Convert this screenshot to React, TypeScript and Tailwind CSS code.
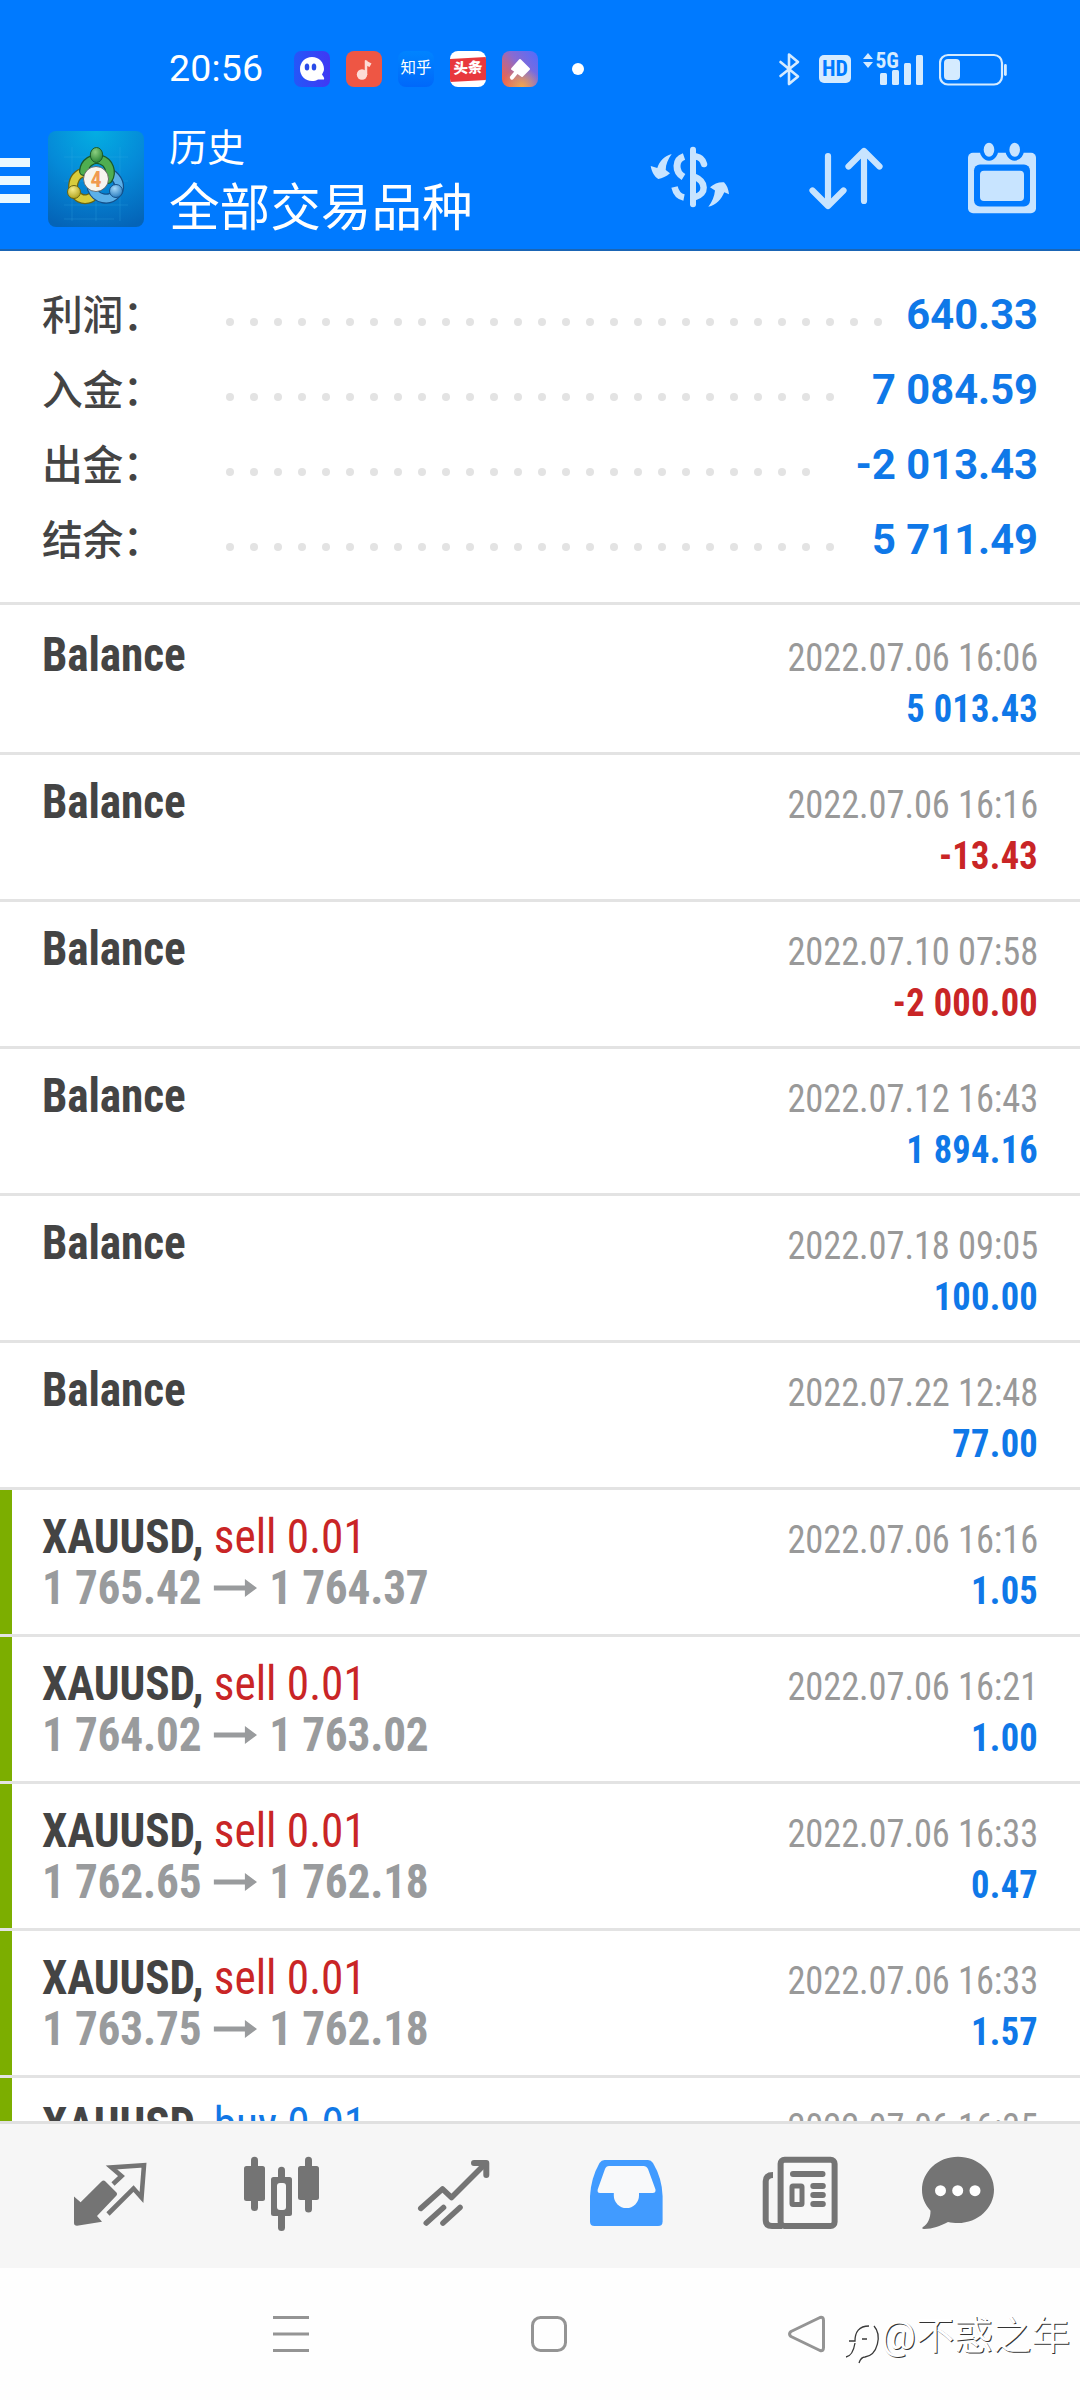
import React from 'react';

interface SummaryLine {
    label: string;
    dots: number;
    value: string;
}

interface Deal {
    symbol: string;
    side?: 'buy' | 'sell';
    volume?: string;
    open?: string;
    close?: string;
    time: string;
    profit: string;
}

const summary: SummaryLine[] = [
    { label: '利润：', dots: 28, value: '640.33' },
    { label: '入金：', dots: 26, value: '7 084.59' },
    { label: '出金：', dots: 25, value: '-2 013.43' },
    { label: '结余：', dots: 26, value: '5 711.49' },
];

const deals: Deal[] = [
    { symbol: 'Balance', time: '2022.07.06 16:06', profit: '5 013.43' },
    { symbol: 'Balance', time: '2022.07.06 16:16', profit: '-13.43' },
    { symbol: 'Balance', time: '2022.07.10 07:58', profit: '-2 000.00' },
    { symbol: 'Balance', time: '2022.07.12 16:43', profit: '1 894.16' },
    { symbol: 'Balance', time: '2022.07.18 09:05', profit: '100.00' },
    { symbol: 'Balance', time: '2022.07.22 12:48', profit: '77.00' },
    { symbol: 'XAUUSD', side: 'sell', volume: '0.01', open: '1 765.42', close: '1 764.37', time: '2022.07.06 16:16', profit: '1.05' },
    { symbol: 'XAUUSD', side: 'sell', volume: '0.01', open: '1 764.02', close: '1 763.02', time: '2022.07.06 16:21', profit: '1.00' },
    { symbol: 'XAUUSD', side: 'sell', volume: '0.01', open: '1 762.65', close: '1 762.18', time: '2022.07.06 16:33', profit: '0.47' },
    { symbol: 'XAUUSD', side: 'sell', volume: '0.01', open: '1 763.75', close: '1 762.18', time: '2022.07.06 16:33', profit: '1.57' },
    { symbol: 'XAUUSD', side: 'buy', volume: '0.01', open: '1 763.46', close: '1 763.90', time: '2022.07.06 16:35', profit: '0.44' },
];

const StatusBar = () => (
    <div className="flex h-[120px] items-center pt-[18px] pl-[169px] text-white">
        <div className="w-[125px] text-[37.5px] leading-none font-[450] tracking-[0.2px]">20:56</div>
        <div className="flex gap-4">
            {/* Ghost browser */}
            <svg className="h-9 w-9" viewBox="0 0 36 36">
                <defs>
                    <linearGradient id="ghost" x1="0" y1="0" x2="1" y2="0">
                        <stop offset="0" stopColor="#2457f8" />
                        <stop offset="1" stopColor="#4038f4" />
                    </linearGradient>
                </defs>
                <rect width="36" height="36" rx="7" fill="url(#ghost)" />
                <path d="M18 6c-7 0-12 5.500-12 12s5 12 12 12c2.500 0 4-.5 6-1.500h6c.8-2-1-3-2-5 1-2 2-3.500 2-5.500C30 11.500 25 6 18 6z" fill="#fff" />
                <ellipse cx="13" cy="16" rx="2.300" ry="3.600" fill="#2a4be8" />
                <ellipse cx="20" cy="16" rx="2.300" ry="3.600" fill="#2a4be8" />
            </svg>
            {/* Music */}
            <svg className="h-9 w-9" viewBox="0 0 36 36">
                <rect width="36" height="36" rx="8" fill="#ee5644" />
                <circle cx="16" cy="23.500" r="5.200" fill="#fddcd6" />
                <path d="M20 24V9.500" fill="none" stroke="#fddcd6" strokeWidth="2.500" />
                <path d="M19 9l6.500 3.500-2 3.500L19 14z" fill="#fddcd6" />
            </svg>
            <div className="flex h-9 w-9 items-center justify-center rounded-lg bg-linear-to-b from-[#0084ff] to-[#0068fa] text-[15.5px] leading-none whitespace-nowrap">
                知乎
            </div>
            <div className="flex h-9 w-9 items-center justify-center overflow-hidden rounded-lg bg-white">
                <div className="flex h-[23px] w-9 shrink-0 -skew-y-3 items-center justify-center bg-[#e8383d] text-[14.5px] leading-none font-black whitespace-nowrap">
                    头条
                </div>
            </div>
            <svg className="h-9 w-9" viewBox="0 0 36 36">
                <defs>
                    <linearGradient id="pin" x1="0" y1="0.700" x2="1" y2="0">
                        <stop offset="0" stopColor="#ea6450" />
                        <stop offset="0.450" stopColor="#8a6bd0" />
                        <stop offset="1" stopColor="#4f6cff" />
                    </linearGradient>
                    <radialGradient id="glow" cx="0.550" cy="1" r="0.550">
                        <stop offset="0" stopColor="#f0a850" />
                        <stop offset="1" stopColor="#f0a850" stopOpacity="0" />
                    </radialGradient>
                </defs>
                <rect width="36" height="36" rx="8" fill="url(#pin)" />
                <rect width="36" height="36" rx="8" fill="url(#glow)" />
                <path d="M18 9l9 9-7 7-10-7z" fill="#fff" stroke="#fff" strokeWidth="2" strokeLinejoin="round" />
                <path d="M14.500 21l-4.500 5.500" stroke="#fff" strokeWidth="4.200" strokeLinecap="round" />
            </svg>
        </div>
        <div className="ml-[34px] h-3 w-3 rounded-full bg-white" />
        <svg className="ml-[194px] h-9 w-6" viewBox="0 0 24 36" fill="none" stroke="#d5ebff" strokeWidth="2.600" strokeLinejoin="round" strokeLinecap="round">
            <path d="M2.500 11L20 25.500l-9 7.500V3.500L20 11 2.500 25" />
        </svg>
        <div className="ml-[17px] flex h-7 w-8 items-center justify-center rounded-[5px] bg-[#d5ebff] text-[22px] leading-none font-bold text-[#007aff] font-stretch-condensed">
            HD
        </div>
        <svg className="ml-[11px] h-9 w-[62px] overflow-visible" viewBox="0 0 62 36" fill="#d5ebff">
            <path d="M1 8l5-6 5 6zM1 11h10l-5 6z" />
            <text x="13.500" y="17" className="text-[21.500px] font-bold font-stretch-condensed">5G</text>
            <rect x="18" y="22" width="7" height="12" rx="1.500" />
            <rect x="30" y="19" width="7" height="15" rx="1.500" />
            <rect x="42" y="12" width="7" height="22" rx="1.500" />
            <rect x="54" y="4" width="7" height="30" rx="1.500" />
        </svg>
        <svg className="ml-[15px] h-9 w-[68px]" viewBox="0 0 68 36" fill="#d5ebff">
            <rect x="1" y="4" width="62" height="29.500" rx="8" fill="none" stroke="#d5ebff" strokeWidth="2.200" />
            <rect x="5" y="8" width="16" height="21" rx="4" />
            <rect x="65" y="13" width="2.800" height="12" rx="1.400" />
        </svg>
    </div>
);

const AppLogo = () => (
    <svg className="h-24 w-24" viewBox="0 0 96 96">
        <defs>
            <radialGradient id="tile" cx="0.500" cy="0" r="1.050">
                <stop offset="0" stopColor="#04aee2" />
                <stop offset="0.500" stopColor="#058ad8" />
                <stop offset="1" stopColor="#0464b8" />
            </radialGradient>
            <radialGradient id="green" cx="0.400" cy="0.300" r="0.800">
                <stop offset="0" stopColor="#8ccf80" />
                <stop offset="1" stopColor="#1d7a2c" />
            </radialGradient>
            <radialGradient id="yellow" cx="0.400" cy="0.300" r="0.800">
                <stop offset="0" stopColor="#f6ec8a" />
                <stop offset="1" stopColor="#a89a12" />
            </radialGradient>
            <radialGradient id="blue" cx="0.400" cy="0.300" r="0.800">
                <stop offset="0" stopColor="#a4d8fa" />
                <stop offset="1" stopColor="#1b72b8" />
            </radialGradient>
        </defs>
        <rect width="96" height="96" rx="8" fill="url(#tile)" />
        <path d="M16 26h64M16 50h64M16 74h64M16 88h50M24 16v74M48 16v74M72 16v74" stroke="#3ab4ea" strokeOpacity="0.250" />
        <g fill="none" strokeLinecap="round">
            <path d="M38 41a14 14 0 0 0-6 26c5 2.500 11 1 14-3" stroke="#6a6410" strokeWidth="10" />
            <path d="M38 41a14 14 0 0 0-6 26c5 2.500 11 1 14-3" stroke="#d8cc3c" strokeWidth="7.500" />
            <path d="M65 44c7 6 8 14 3 19-7 8-20 5-24-5" stroke="#14508a" strokeWidth="10" />
            <path d="M65 44c7 6 8 14 3 19-7 8-20 5-24-5" stroke="#5cb0e8" strokeWidth="7.500" />
            <path d="M36 40a13 13 0 1 1 24 8" stroke="#1a5a2a" strokeWidth="10" />
            <path d="M36 40a13 13 0 1 1 24 8" stroke="#4fae50" strokeWidth="7.500" />
        </g>
        <ellipse cx="48.500" cy="24" rx="6.200" ry="7.500" fill="url(#green)" stroke="#1a5a2a" />
        <circle cx="26" cy="61" r="6.500" fill="url(#yellow)" stroke="#6a6410" />
        <circle cx="68" cy="60" r="6.500" fill="url(#blue)" stroke="#14508a" />
        <circle cx="48" cy="48" r="12.500" fill="#f7f5f0" stroke="#555" strokeWidth="0.800" />
        <text x="48" y="56" textAnchor="middle" fill="#f09a50" className="text-[22px] font-bold font-stretch-condensed">4</text>
    </svg>
);

const AppBar = () => (
    <div className="flex h-[129px] items-start text-white">
        <div className="mt-[38px] flex w-[30px] flex-col gap-[9px]">
            <div className="h-[9px] bg-[#eaf9ff]" />
            <div className="h-[9px] bg-[#eaf9ff]" />
            <div className="h-[9px] bg-[#eaf9ff]" />
        </div>
        <div className="mt-[11px] ml-[18px]">
            <AppLogo />
        </div>
        <div className="ml-[25px] w-[481px]">
            <div className="pt-[3px] text-[38px] leading-[50px]">历史</div>
            <div className="text-[50.6px] leading-[71px]">全部交易品种</div>
        </div>
        <svg className="mt-[25px] h-16 w-20" viewBox="0 0 80 64" fill="none" stroke="#c8e4ff" strokeWidth="6.500">
            <path d="M43 4.700v54.600" strokeWidth="6" strokeLinecap="round" />
            <path d="M34 11.500c-9 3-9.500 15-.5 20.500" strokeWidth="7" />
            <path d="M24.500 42c1.500 6.500 4.500 9.500 9.500 10.500" />
            <path d="M46 11.500c5 .8 7 3.500 8 7.500" strokeLinecap="round" />
            <path d="M45 32c11 4.500 12 17 0 20" />
            <path d="M21.700 9c-8 2-12.500 8-14.400 14L.7 21c1 6 4 11 7.600 13 4-.5 8-2.500 11.700-5.700L15.700 25c0-6 2.500-11 6-16zM58.300 61.700c4-5 6-10 6.700-16.200l-5-3.200c4-3.500 9-5.500 14-5 3 3 4.500 7 5 12l-4.700-2c-3 7-8 13-16 14.400z" fill="#c8e4ff" stroke="none" />
        </svg>
        <svg className="ml-[76px] mt-[26px] h-16 w-20" viewBox="0 0 80 64" fill="none" stroke="#c8e4ff" strokeWidth="6.200" strokeLinecap="round" strokeLinejoin="round">
            <path d="M22 10v49M6.500 44.500L22 60l15.500-15.500M58 55V6M42.500 20.500L58 5l15.500 15.500" />
        </svg>
        <svg className="ml-[80px] mt-[22px] h-[72px] w-[72px]" viewBox="0 0 72 72" fill="#c8e4ff">
            <rect x="2" y="10.700" width="68" height="60.600" rx="5" />
            <g stroke="#007aff" strokeWidth="8" paintOrder="stroke">
                <ellipse cx="23" cy="7.700" rx="5.300" ry="7" />
                <ellipse cx="48.700" cy="7.700" rx="5.300" ry="7" />
            </g>
            <rect x="8" y="22.500" width="56" height="42" rx="6" fill="#007aff" />
            <rect x="14" y="28.700" width="44" height="30.300" rx="4" />
        </svg>
    </div>
);

const Summary = () => (
    <div className="border-b-[3px] border-[#e3e3e3] pt-[26px] pr-[42px] pb-[25px] pl-[42px]">
        {summary.map(line => (
            <div key={line.label} className="flex h-[75px] items-center">
                <div className="w-[176px] pt-[3px] text-[40.8px] leading-none font-medium tracking-[-0.4px] text-[#444]">{line.label}</div>
                <div className="flex flex-1 pt-[14px]">
                    {Array.from({ length: line.dots }, (_, i) => (
                        <div key={i} className="w-6 pl-2">
                            <div className="h-2 w-2 rounded-full bg-[#e3e3e3]" />
                        </div>
                    ))}
                </div>
                <div className="text-[41.7px] leading-none font-bold text-[#0f78e8]">{line.value}</div>
            </div>
        ))}
    </div>
);

const PriceArrow = () => (
    <svg className="mx-[13px] h-[18px] w-[46px]" viewBox="0 0 43 18" preserveAspectRatio="none" fill="#999b9d">
        <path d="M0 6.500h31V0l12 9-12 9v-6.500H0z" />
    </svg>
);

const DealRow: React.FC<{ deal: Deal }> = ({ deal }) => {
    const isTrade = !!deal.side;
    const sideColor = deal.side === 'buy' ? 'text-[#1178e6]' : 'text-[#c92526]';
    const profitColor = deal.profit.startsWith('-') ? 'text-[#c92526]' : 'text-[#0f78e8]';

    return (
        <div className="flex h-[147px] shrink-0 border-b-[3px] border-[#e3e3e3] pr-[42px] font-stretch-condensed">
            <div className={`w-3 ${isTrade ? 'bg-[#7cae00]' : ''}`} />
            <div className="flex-1 pt-[21px] pl-[30px]">
                <div className="origin-left scale-x-[0.943] text-[48px] leading-[51px]">
                    <div>
                        <span className="font-bold tracking-[-0.1px] text-[#444]">{isTrade ? `${deal.symbol},` : deal.symbol}</span>
                        {isTrade && <span className={`font-[450] ${sideColor}`}> {deal.side} {deal.volume}</span>}
                    </div>
                    {isTrade && (
                        <div className="flex items-center font-bold tracking-[-0.2px] text-[#999b9d]">
                            <span>{deal.open}</span>
                            <PriceArrow />
                            <span>{deal.close}</span>
                        </div>
                    )}
                </div>
            </div>
            <div className="pt-[25px] text-right">
                <div className="origin-right scale-x-[0.935] text-[39px] leading-[51px]">
                    <div className="tracking-[-0.1px] text-[#999]">{deal.time}</div>
                    <div className={`font-bold tracking-[0.3px] ${profitColor}`}>{deal.profit}</div>
                </div>
            </div>
        </div>
    );
};

const TabBar = () => (
    <div className="flex h-[147px] border-t-[3px] border-[#e0e0e0] bg-[#f6f6f6] pl-6">
        {/* Quotes */}
        <svg className="h-36 w-[172px]" viewBox="0 0 172 144" fill="#747474">
            <path d="M50 72.500l6.600 5.800L77.500 57.500q2-2 4 0L92.500 68.500q1.200 1.500 0 3L73 92l5 5.700-25 4q-3 0-3-2.700z" />
            <path d="M89 60l8.500-8L87.500 43.500 120 41.200l-2.500 32.300-8-9L84 90" fill="none" stroke="#747474" strokeWidth="4.600" />
        </svg>
        {/* Charts */}
        <svg className="h-36 w-[172px]" viewBox="0 0 172 144" fill="#747474">
            <rect x="48" y="42" width="21" height="35" rx="2.500" />
            <rect x="55" y="32.700" width="7" height="54.300" rx="3.500" />
            <rect x="102" y="42" width="21" height="34" rx="2.500" />
            <rect x="109" y="32.700" width="7" height="55.800" rx="3.500" />
            <rect x="75" y="53" width="21" height="39" rx="2.500" />
            <rect x="82" y="42.700" width="7" height="64.300" rx="3.500" />
            <rect x="81" y="59" width="9" height="27" rx="3" fill="#f8f8f8" />
        </svg>
        {/* Trade */}
        <svg className="h-36 w-[172px]" viewBox="0 0 172 144" fill="none" stroke="#747474" strokeWidth="5.600" strokeLinecap="round" strokeLinejoin="round">
            <path d="M52.800 84.300L74.500 65l9 8.500L116 41M75.500 83.500L58.300 99M92 83.500L75 99" />
            <path d="M106 39h12.300v12" strokeWidth="6" />
        </svg>
        {/* History */}
        <svg className="h-36 w-[172px]" viewBox="0 0 172 144">
            <path d="M64.500 36h43.500q3 0 5 3 9 15 9.600 33v25.500q0 4.500-4.500 4.500H54.500Q50 102 50 97.500V72q1-18 9.500-33 2-3 5-3z" fill="#419bff" />
            <path d="M69 42h34.500q3 0 4.500 3l7.500 20.500q.5 3.500-3 3.500H99v2.500a12.600 12.600 0 0 1-25.200 0V69H60q-3 0-2.300-3.500L65 45q1.200-3 4-3z" fill="#f8f9fa" />
        </svg>
        {/* News */}
        <svg className="h-36 w-[172px]" viewBox="0 0 172 144" fill="none" stroke="#747474" strokeWidth="6">
            <rect x="68.600" y="35.700" width="54" height="66.300" rx="4" fill="#f8f8f8" />
            <path d="M61 51q-7.300 0-7.300 6.500V96q0 6 6.300 6h10" />
            <path d="M81 50h29.500M101.300 62h9.500M101.300 71h9.500M101.300 80h9.500" strokeLinecap="round" />
            <rect x="80" y="62" width="10" height="18.500" rx="1" strokeWidth="5" />
        </svg>
        {/* Messages */}
        <svg className="h-36 w-[172px]" viewBox="0 0 172 144" fill="#747474">
            <path d="M74 32.700c20 0 36 14.800 36 33s-16 33.300-36 33.300c-3.500 0-7-.4-10-1-8 4-15 7-24 7-2 0-2.300-1.200-1-2 5-3 7.500-9 7.500-16.300C41 80.500 38 74 38 66c0-18.500 16-33.300 36-33.300z" />
            <g fill="#fff">
                <circle cx="56.500" cy="66.700" r="5.500" />
                <circle cx="73.700" cy="66.700" r="5.500" />
                <circle cx="91" cy="66.700" r="5.500" />
            </g>
        </svg>
    </div>
);

const NavBar = () => (
    <div className="flex h-[132px] items-center bg-[#fefefe] pl-[271px]">
        <svg className="h-10 w-10" viewBox="0 0 40 40" stroke="#949494" strokeWidth="3">
            <path d="M2 3.500h36M2 20h36M2 36.500h36" />
        </svg>
        <svg className="ml-[218px] h-10 w-10" viewBox="0 0 40 40" fill="none" stroke="#949494" strokeWidth="3">
            <rect x="3.500" y="3.500" width="33" height="33" rx="8" />
        </svg>
        <svg className="ml-[218px] h-10 w-10" viewBox="0 0 40 40" fill="none" stroke="#949494" strokeWidth="3" strokeLinejoin="round">
            <path d="M4 17.500q-3 2.500 0 5L33 36.500q3.500 1 3.500-3v-27q0-4-3.500-3z" />
        </svg>
        {/* Author signature */}
        <div className="ml-[18px] flex items-center text-white text-shadow-[1px_1px_0.5px_#333]">
            <svg className="mt-5 h-10 w-9" viewBox="0 0 36 40" fill="none" stroke="#3a3a3a" strokeWidth="1.300">
                <path d="M1 33c6-1 8-8 9-14M4 17h6C10 8 14 2 24 2M17 15h5M29 2c8 9 4 29-9 31-3 0-5 3-6 6" />
            </svg>
            <div className="pt-1 text-[38.6px] leading-none whitespace-nowrap">@不惑之年</div>
        </div>
    </div>
);

const App: React.FC = () => {
    return (
        <div className="flex h-[2400px] w-[1080px] flex-col overflow-hidden bg-white font-['Roboto','Noto_Sans_CJK_SC',sans-serif]">
            <div className="h-[251px] shrink-0 border-b-2 border-[#1a65b5] bg-[#007aff]">
                <StatusBar />
                <AppBar />
            </div>
            <Summary />
            <div className="flex min-h-0 flex-1 flex-col overflow-hidden pt-[3px]">
                {deals.map((deal, index) => (
                    <DealRow key={index} deal={deal} />
                ))}
            </div>
            <TabBar />
            <NavBar />
        </div>
    );
};

export default App;
